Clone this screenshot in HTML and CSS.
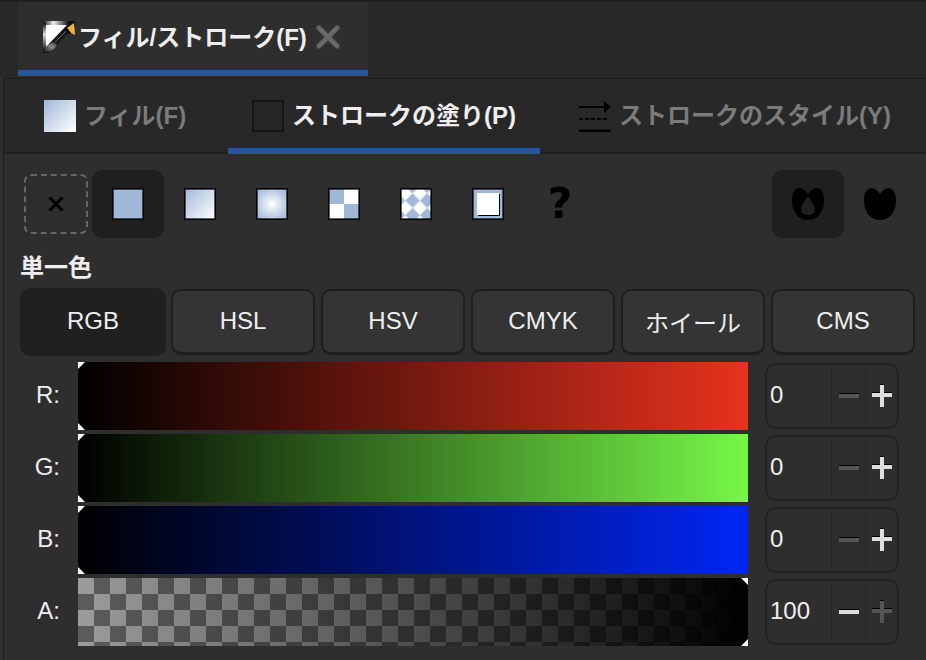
FILE: index.html
```html
<!DOCTYPE html>
<html>

	<head>
		<meta charset="utf-8">
		<title>フィル/ストローク</title>
		<link rel="stylesheet" href="styles.css">
	</head>

	<body>
		<svg class="defs" width="0" height="0">
			<defs>
				<linearGradient id="grad-diag" x1="0" y1="0" x2="1" y2="1">
					<stop offset="0" stop-color="#a0b8d8"/>
					<stop offset="1" stop-color="#fff"/>
				</linearGradient>
				<radialGradient id="grad-radial" cx="0.5" cy="0.5" r="0.62">
					<stop offset="0" stop-color="#fff"/>
					<stop offset="1" stop-color="#a0b8d8"/>
				</radialGradient>
				<linearGradient id="grad-top" x1="0" y1="0" x2="1" y2="0">
					<stop offset="0" stop-color="#111"/>
					<stop offset="0.35" stop-color="#eee"/>
					<stop offset="0.85" stop-color="#111"/>
				</linearGradient>
				<linearGradient id="grad-left" x1="0" y1="0" x2="0" y2="1">
					<stop offset="0" stop-color="#111"/>
					<stop offset="0.4" stop-color="#ddd"/>
					<stop offset="1" stop-color="#111"/>
				</linearGradient>
				<linearGradient id="grad-brush" x1="0" y1="1" x2="1" y2="0">
					<stop offset="0" stop-color="#222"/>
					<stop offset="0.55" stop-color="#8a8a8a"/>
					<stop offset="1" stop-color="#333"/>
				</linearGradient>
				<pattern id="diamonds" width="14.6" height="14.6" patternUnits="userSpaceOnUse" x="-2" y="-2">
					<rect width="14.6" height="14.6" fill="#a0b8d8"/>
					<path d="M7.3 0l7.3 7.3-7.3 7.3L0 7.3z" fill="#fff"/>
				</pattern>
				<symbol id="plus" viewBox="0 0 20 24">
					<path d="M8 0h4v8h8v1H0V8h8z" fill="#000"/>
					<path d="M8 1h4v8h8v4h-8v10H8V13H0V9h8z"/>
				</symbol>
				<symbol id="minus" viewBox="0 0 20 6">
					<path d="M0 0h20v1H0z" fill="#000"/>
					<path d="M0 1h20v4H0z"/>
				</symbol>
			</defs>
		</svg>

		<header class="dock-bar">
			<div class="dock-tab">
				<svg class="pen-icon" width="32" height="32" viewBox="0 0 32 32">
					<path d="M0 0h32v5L5 32H0z" fill="#111"/>
					<path d="M3 4h21L3 26z" fill="#fff"/>
					<path d="M0 0h30v4H0z" fill="url(#grad-top)"/>
					<path d="M0 2h3v28H0z" fill="url(#grad-left)"/>
					<path d="M1 31c2-6 6-9 10-10l3 3c-2 4-7 7-13 7z" fill="url(#grad-brush)"/>
					<path d="M11 21L24 8l3 3-13 13z" fill="#1c1c1c"/>
					<path d="M12 21L25 8" stroke="#666" stroke-width="1"/>
					<path d="M24 7l7-5 1 12-4-2z" fill="#f2b632"/>
					<path d="M24 7l4 5-2 1-4-4z" fill="#000"/>
				</svg>
				<span class="dock-title">フィル/ストローク(F)</span>
				<svg class="close-icon" width="24" height="24" viewBox="0 0 24 24">
					<path d="M3 3l18 18M21 3L3 21" stroke="#3c3c3c" stroke-width="7" stroke-linecap="round"/>
					<path d="M3 3l18 18M21 3L3 21" stroke="#6a6a6a" stroke-width="4.500" stroke-linecap="round"/>
				</svg>
			</div>
		</header>

		<main class="panel">
			<nav class="sub-tabs">
				<div class="sub-tab tab-fill">
					<svg width="32" height="32" viewBox="0 0 32 32"><rect width="32" height="32" fill="url(#grad-diag)"/></svg>
					<span>フィル(F)</span>
				</div>
				<div class="sub-tab tab-stroke active">
					<svg width="32" height="32" viewBox="0 0 32 32"><rect x="1" y="1" width="30" height="30" fill="#262626" stroke="#161616" stroke-width="2"/></svg>
					<span>ストロークの塗り(P)</span>
				</div>
				<div class="sub-tab tab-style">
					<svg width="32" height="32" viewBox="0 0 32 32">
						<path d="M0 7h27" stroke="#000" stroke-width="2"/>
						<path d="M25 1l7 6-7 6z" fill="#000"/>
						<path d="M0 19h30" stroke="#000" stroke-width="2" stroke-dasharray="4 2"/>
						<path d="M0 31h32" stroke="#000" stroke-width="3"/>
					</svg>
					<span>ストロークのスタイル(Y)</span>
				</div>
			</nav>

			<section class="paint-row">
				<button class="paint-btn none">
					<svg width="16" height="16" viewBox="0 0 16 16"><path d="M1.500 1.500l13 13M14.500 1.500l-13 13" stroke="#000" stroke-width="3"/></svg>
				</button>
				<button class="paint-btn on">
					<svg width="32" height="32" viewBox="0 0 32 32"><rect x=".8" y=".8" width="30.400" height="30.400" fill="#a0b8d8" stroke="#000" stroke-width="1.600"/></svg>
				</button>
				<button class="paint-btn">
					<svg width="32" height="32" viewBox="0 0 32 32"><rect x=".8" y=".8" width="30.400" height="30.400" fill="url(#grad-diag)" stroke="#000" stroke-width="1.600"/></svg>
				</button>
				<button class="paint-btn">
					<svg width="32" height="32" viewBox="0 0 32 32"><rect x=".8" y=".8" width="30.400" height="30.400" fill="url(#grad-radial)" stroke="#000" stroke-width="1.600"/></svg>
				</button>
				<button class="paint-btn">
					<svg width="32" height="32" viewBox="0 0 32 32">
						<rect width="32" height="32" fill="#fff"/>
						<path d="M0 0h16v16H0zM16 16h16v16H16z" fill="#a0b8d8"/>
						<rect x=".8" y=".8" width="30.400" height="30.400" fill="none" stroke="#000" stroke-width="1.600"/>
					</svg>
				</button>
				<button class="paint-btn">
					<svg width="32" height="32" viewBox="0 0 32 32"><rect x=".8" y=".8" width="30.400" height="30.400" fill="url(#diamonds)" stroke="#000" stroke-width="1.600"/></svg>
				</button>
				<button class="paint-btn">
					<svg width="32" height="32" viewBox="0 0 32 32">
						<rect x=".8" y=".8" width="30.400" height="30.400" fill="#a0b8d8" stroke="#000" stroke-width="1.600"/>
						<rect x="6" y="6" width="22" height="22" fill="#000"/>
						<rect x="5" y="5" width="22" height="22" fill="#fff"/>
					</svg>
				</button>
				<button class="paint-btn"><span class="unknown">?</span></button>
				<span class="paint-gap"></span>
				<button class="paint-btn on">
					<svg width="32" height="32" viewBox="0 0 32 32">
						<path fill-rule="evenodd" d="M16 32C6 32 0 24 0 12 0 6 2 1 7 0c4 0 7 3 9 6 2-3 5-6 9-6 5 1 7 6 7 12 0 12-6 20-16 20zM16 8c-3 5-7 9-7 13 0 4 3 6 7 6s7-2 7-6c0-4-4-8-7-13z" fill="#000"/>
					</svg>
				</button>
				<button class="paint-btn">
					<svg width="32" height="32" viewBox="0 0 32 32">
						<path d="M16 32C6 32 0 24 0 12 0 6 2 1 7 0c4 0 7 3 9 6 2-3 5-6 9-6 5 1 7 6 7 12 0 12-6 20-16 20z" fill="#000"/>
					</svg>
				</button>
			</section>

			<h3 class="paint-label">単一色</h3>

			<section class="mode-row">
				<button class="mode-btn on">RGB</button>
				<button class="mode-btn">HSL</button>
				<button class="mode-btn">HSV</button>
				<button class="mode-btn">CMYK</button>
				<button class="mode-btn wheel">ホイール</button>
				<button class="mode-btn">CMS</button>
			</section>

			<section class="sliders">
				<div class="slider-row">
					<label>R:</label>
					<div class="slider red"><i class="mark tl"></i><i class="mark bl"></i></div>
					<div class="spin">
						<span class="spin-val">0</span>
						<span class="spin-btn off"><svg width="20" height="6"><use href="#minus"/></svg></span>
						<span class="spin-btn"><svg width="20" height="24"><use href="#plus"/></svg></span>
					</div>
				</div>
				<div class="slider-row">
					<label>G:</label>
					<div class="slider green"><i class="mark tl"></i><i class="mark bl"></i></div>
					<div class="spin">
						<span class="spin-val">0</span>
						<span class="spin-btn off"><svg width="20" height="6"><use href="#minus"/></svg></span>
						<span class="spin-btn"><svg width="20" height="24"><use href="#plus"/></svg></span>
					</div>
				</div>
				<div class="slider-row">
					<label>B:</label>
					<div class="slider blue"><i class="mark tl"></i><i class="mark bl"></i></div>
					<div class="spin">
						<span class="spin-val">0</span>
						<span class="spin-btn off"><svg width="20" height="6"><use href="#minus"/></svg></span>
						<span class="spin-btn"><svg width="20" height="24"><use href="#plus"/></svg></span>
					</div>
				</div>
				<div class="slider-row">
					<label>A:</label>
					<div class="slider alpha"><i class="mark tr"></i><i class="mark br"></i></div>
					<div class="spin">
						<span class="spin-val">100</span>
						<span class="spin-btn"><svg width="20" height="6"><use href="#minus"/></svg></span>
						<span class="spin-btn off"><svg width="20" height="24"><use href="#plus"/></svg></span>
					</div>
				</div>
			</section>
		</main>
	</body>

</html>
```

FILE: styles.css
```css
* {
	box-sizing: border-box;
}
html, body {
	margin: 0;
	padding: 0;
	height: 660px;
	overflow: hidden;
}
body {
	background-color: #2e2e2e;
	color: #eee;
	font-family: "Liberation Sans", "Noto Sans CJK JP", sans-serif;
}
h3 {
	margin: 0;
}
button {
	font: inherit;
	color: inherit;
	padding: 0;
	border: 0;
	background: none;
}
.defs {
	position: absolute;
}

/* dock tab */
.dock-bar {
	height: 78px;
	padding-left: 18px;
	background-color: #282828;
	border-top: 2px solid #1f1f1f;
	border-bottom: 2px solid #282828;
}
.dock-tab {
	display: flex;
	align-items: center;
	width: 350px;
	height: 74px;
	padding: 0 0 0 24px;
	background-color: #2e2e2e;
	border-bottom: 6px solid #2a5599;
}
.pen-icon {
	margin: 2px 0 0 1px;
}
.dock-title {
	margin: 0 0 2px 3px;
	font-size: 24px;
	font-weight: bold;
	white-space: nowrap;
}
.close-icon {
	margin: 2px 28px 0 auto;
}

/* panel */
.panel {
	height: 582px;
	margin-left: 3px;
	border-left: 1px solid #1c1c1c;
	border-top: 1px solid #1c1c1c;
}
.sub-tabs {
	display: flex;
	height: 75px;
	background-color: #282828;
	border-bottom: 2px solid #1e1e1e;
}
.sub-tab {
	display: flex;
	align-items: center;
	gap: 8px;
	height: 75px;
	padding-bottom: 1px;
	margin-bottom: -2px;
	font-size: 24px;
	font-weight: bold;
	color: #7b7b7b;
	white-space: nowrap;
}
.sub-tab span {
	margin-bottom: 5px;
}
.tab-fill {
	width: 224px;
	padding-left: 40px;
}
.tab-stroke {
	width: 312px;
	padding-left: 24px;
}
.tab-style {
	padding-left: 39px;
}
.sub-tab.active {
	color: #eee;
	border-bottom: 6px solid #2a5599;
	padding: 5px 0 0 24px;
}

/* paint type buttons */
.paint-row {
	display: flex;
	height: 68px;
	margin: 16px 0 0 16px;
	width: 896px;
}
.paint-btn {
	display: flex;
	align-items: center;
	justify-content: center;
	width: 72px;
	height: 68px;
	border-radius: 10px;
}
.paint-btn.on {
	background-color: #1f1f1f;
}
.paint-btn.none {
	width: 64px;
	height: 60px;
	margin: 4px;
	border: 2px dashed #666;
	border-radius: 7px;
}
.paint-gap {
	flex: 1;
}
.unknown {
	font-size: 42px;
	font-weight: bold;
	color: #000;
	line-height: 1;
	font-family: "DejaVu Sans", sans-serif;
}
.paint-label {
	height: 50px;
	padding: 15px 0 0 16px;
	font-size: 24px;
	line-height: 30px;
	font-weight: bold;
}

/* colour mode buttons */
.mode-row {
	display: grid;
	grid-template-columns: repeat(6, 146px);
	gap: 4px;
	margin-left: 16px;
}
.mode-btn {
	height: 66px;
	margin: 1px;
	font-size: 24px;
	background-color: #343434;
	border: 2px solid #1e1e1e;
	border-bottom-width: 3px;
	border-radius: 10px;
	padding-bottom: 2px;
}
.mode-btn.on {
	height: 68px;
	margin: 0;
	background-color: #202020;
	border: 0;
}
.mode-btn.wheel {
	padding-bottom: 0;
}

/* sliders */
.sliders {
	display: flex;
	flex-direction: column;
	gap: 4px;
	margin-top: 6px;
}
.slider-row {
	display: flex;
	align-items: center;
	height: 68px;
}
.slider-row label {
	width: 74px;
	padding: 0 18px 2px 0;
	text-align: right;
	font-size: 24px;
}
.slider {
	position: relative;
	width: 670px;
	height: 68px;
}
.red {
	background: linear-gradient(to right, #000, #e8321e);
}
.green {
	background: linear-gradient(to right, #000, #76f747);
}
.blue {
	background: linear-gradient(to right, #000, #0026f5);
}
.alpha {
	background:
		linear-gradient(to right, rgba(0, 0, 0, 0), #000),
		repeating-conic-gradient(#5c5c5c 0 25%, #9c9c9c 0 50%) 0 0 / 32px 32px;
}
.mark {
	position: absolute;
	width: 7px;
	height: 7px;
	background-color: #fff;
}
.tl {
	top: 0;
	left: 0;
	clip-path: polygon(0 0, 100% 0, 0 100%);
}
.bl {
	bottom: 0;
	left: 0;
	clip-path: polygon(0 0, 100% 100%, 0 100%);
}
.tr {
	top: 0;
	right: 0;
	clip-path: polygon(0 0, 100% 0, 100% 100%);
}
.br {
	bottom: 0;
	right: 0;
	clip-path: polygon(100% 0, 100% 100%, 0 100%);
}

/* spin box */
.spin {
	display: flex;
	width: 134px;
	height: 66px;
	margin-left: 17px;
	border: 2px solid #222;
	border-radius: 12px;
	font-size: 24px;
}
.spin-val {
	flex: 1;
	padding: 0 0 2px 3px;
	line-height: 60px;
}
.spin-btn {
	display: flex;
	align-items: center;
	justify-content: center;
	width: 34px;
	border-left: 1px solid #252525;
	fill: #ddd;
}
.spin-btn:last-child {
	width: 32px;
}
.spin-btn.off {
	fill: #555;
}
.spin-btn.off path:first-child {
	fill: none;
}
```
